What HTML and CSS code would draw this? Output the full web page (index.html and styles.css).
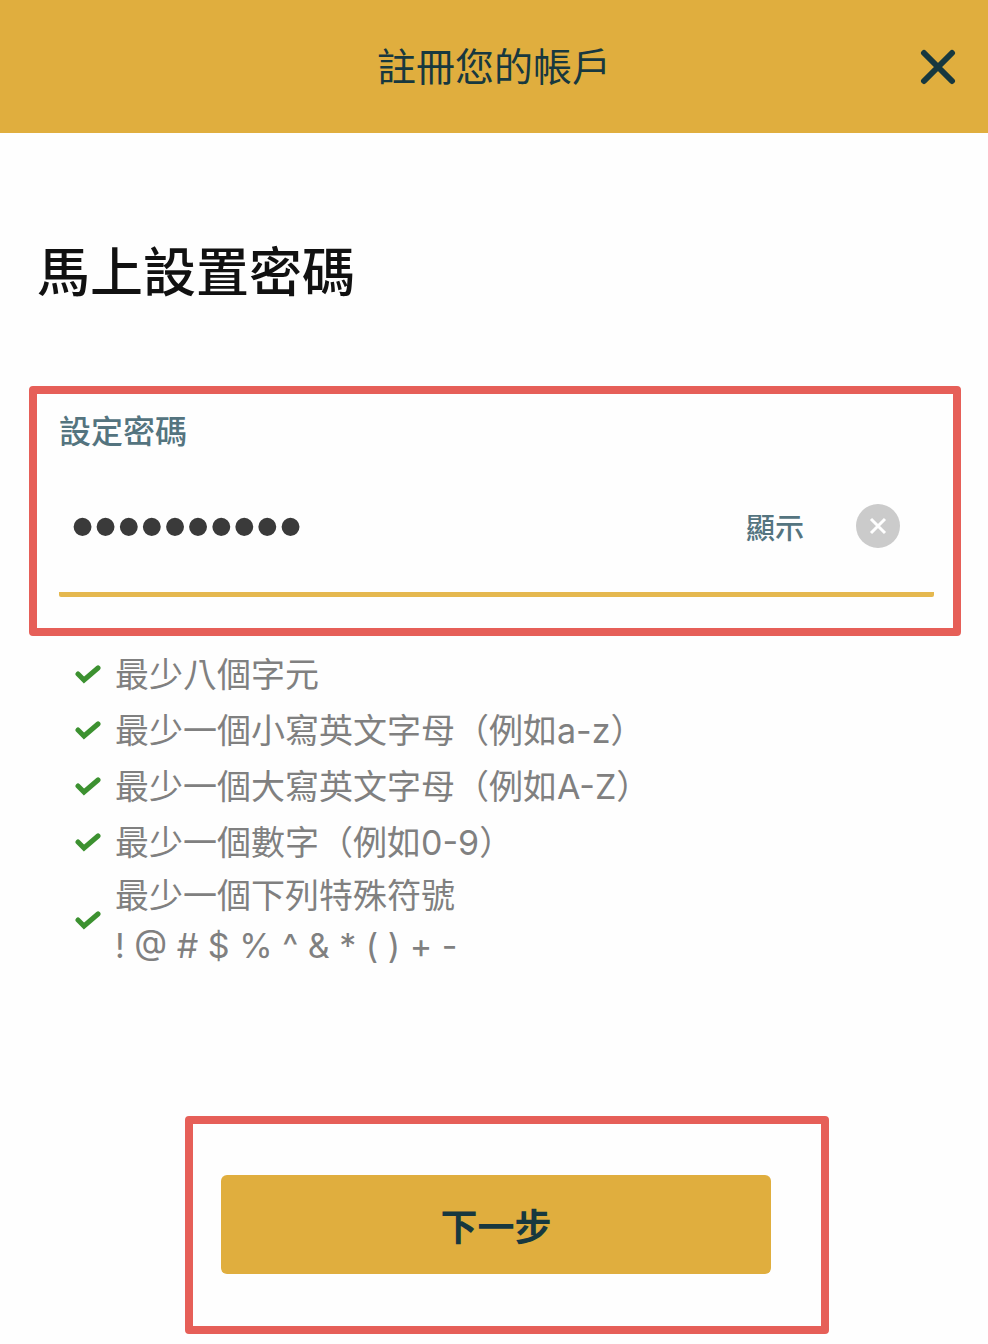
FILE: index.html
```
<!DOCTYPE html>
<html lang="zh-Hant">
<head>
    <meta charset="utf-8">
    <meta name="viewport" content="width=device-width, initial-scale=1.0">
    <title>註冊您的帳戶</title>
    <link rel="stylesheet" href="styles.css">
</head>
<body>
    <header class="topbar">
        <p class="topbar-title">註冊您的帳戶</p>
        <button class="topbar-close" type="button" aria-label="關閉">
            <svg viewBox="0 0 36 36" width="36" height="36" aria-hidden="true">
                <path d="M4 4L32 32M32 4L4 32" fill="none" stroke="currentColor" stroke-width="6" stroke-linecap="round"/>
            </svg>
        </button>
    </header>

    <main class="content">
        <h1 class="page-title">馬上設置密碼</h1>

        <form class="password-form">
            <div class="highlight field">
                <label class="field-label" for="password">設定密碼</label>
                <div class="field-row">
                    <input class="field-input" id="password" type="password" value="Abcdef123!" autocomplete="new-password">
                    <button class="field-show" type="button">顯示</button>
                    <button class="field-clear" type="button" aria-label="清除">
                        <svg viewBox="0 0 18 18" width="18" height="18" aria-hidden="true">
                            <path d="M2 2L16 16M16 2L2 16" fill="none" stroke="currentColor" stroke-width="3"/>
                        </svg>
                    </button>
                </div>
            </div>

            <ul class="rules">
                <li class="rule">
                    <svg class="rule-check" viewBox="0 0 26 20" aria-hidden="true"><path d="M3 9L9 15L23 3"/></svg>
                    <span>最少八個字元</span>
                </li>
                <li class="rule">
                    <svg class="rule-check" viewBox="0 0 26 20" aria-hidden="true"><path d="M3 9L9 15L23 3"/></svg>
                    <span>最少一個小寫英文字母（例如a-z）</span>
                </li>
                <li class="rule">
                    <svg class="rule-check" viewBox="0 0 26 20" aria-hidden="true"><path d="M3 9L9 15L23 3"/></svg>
                    <span>最少一個大寫英文字母（例如A-Z）</span>
                </li>
                <li class="rule">
                    <svg class="rule-check" viewBox="0 0 26 20" aria-hidden="true"><path d="M3 9L9 15L23 3"/></svg>
                    <span>最少一個數字（例如0-9）</span>
                </li>
                <li class="rule">
                    <svg class="rule-check" viewBox="0 0 26 20" aria-hidden="true"><path d="M3 9L9 15L23 3"/></svg>
                    <span>最少一個下列特殊符號<br>! @ # $ % ^ &amp; * ( ) + -</span>
                </li>
            </ul>

            <div class="submit-area">
                <div class="highlight submit">
                    <button class="submit-button" type="submit">下一步</button>
                </div>
            </div>
        </form>
    </main>
</body>
</html>
```
FILE: styles.css
```
:root {
    --gold: #e0ae3e;
    --navy: #17383f;
    --slate: #54747f;
    --grey: #808080;
    --red: #e65f58;
    --green: #3c9130;
}

* {
    margin: 0;
    padding: 0;
    box-sizing: border-box;
}

body {
    font-family: Inter, "Noto Sans CJK TC", sans-serif;
    background: #fefefe;
    color: #111;
}

button {
    font: inherit;
    background: none;
    border: 0;
    cursor: pointer;
}

svg {
    display: block;
}

/* Top bar */
.topbar {
    display: grid;
    grid-template-columns: 1fr auto 1fr;
    align-items: center;
    height: 133px;
    padding: 0 32px;
    background: var(--gold);
    color: var(--navy);
}

.topbar-title {
    grid-column: 2;
    font-size: 39px;
    line-height: 48px;
}

.topbar-close {
    justify-self: end;
    color: var(--navy);
}

/* Content */
.content {
    padding: 110px 27px 10px 29px;
}

.page-title {
    padding-left: 8px;
    margin-bottom: 83px;
    font-size: 53px;
    font-weight: 500;
    line-height: 60px;
}

.highlight {
    border: 8px solid var(--red);
    border-radius: 4px;
}

.field {
    padding: 18px 19px 31px 22px;
}

.field-label {
    display: block;
    margin-bottom: 8px;
    color: var(--slate);
    font-size: 32px;
    font-weight: 500;
    line-height: 40px;
}

.field-row {
    display: flex;
    align-items: center;
    height: 137px;
    padding: 0 34px 0 12px;
    border-bottom: 5px solid #e5b84f;
    border-radius: 2px;
}

.field-input {
    flex: 1;
    min-width: 0;
    height: 80px;
    border: 0;
    outline: 0;
    background: transparent;
    color: #3a3a3a;
    font-family: "Liberation Sans", sans-serif;
    font-size: 66px;
}

.field-show {
    margin-right: 52px;
    padding-top: 6px;
    color: var(--slate);
    font-size: 29px;
    font-weight: 500;
    line-height: 40px;
}

.field-clear {
    display: grid;
    place-items: center;
    width: 44px;
    height: 44px;
    border-radius: 50%;
    background: #cbcbcb;
    color: #fff;
}

/* Password rules */
.rules {
    margin-top: 11px;
    padding-left: 46px;
    list-style: none;
    color: var(--grey);
    font-size: 34px;
    line-height: 50px;
}

.rule {
    display: flex;
    align-items: center;
    gap: 14px;
    min-height: 56px;
}

.rule-check {
    flex: none;
    width: 26px;
    height: 20px;
    fill: none;
    stroke: var(--green);
    stroke-width: 5;
    stroke-linecap: round;
}

/* Next step */
.submit-area {
    padding-left: 24px;
    margin-top: 145px;
}

.submit {
    width: 644px;
    max-width: 100%;
    margin: 0 auto;
    padding: 51px 50px 52px 28px;
}

.submit-button {
    display: block;
    width: 100%;
    height: 99px;
    border-radius: 6px;
    background: var(--gold);
    color: var(--navy);
    font-size: 37px;
    font-weight: 700;
}
```
